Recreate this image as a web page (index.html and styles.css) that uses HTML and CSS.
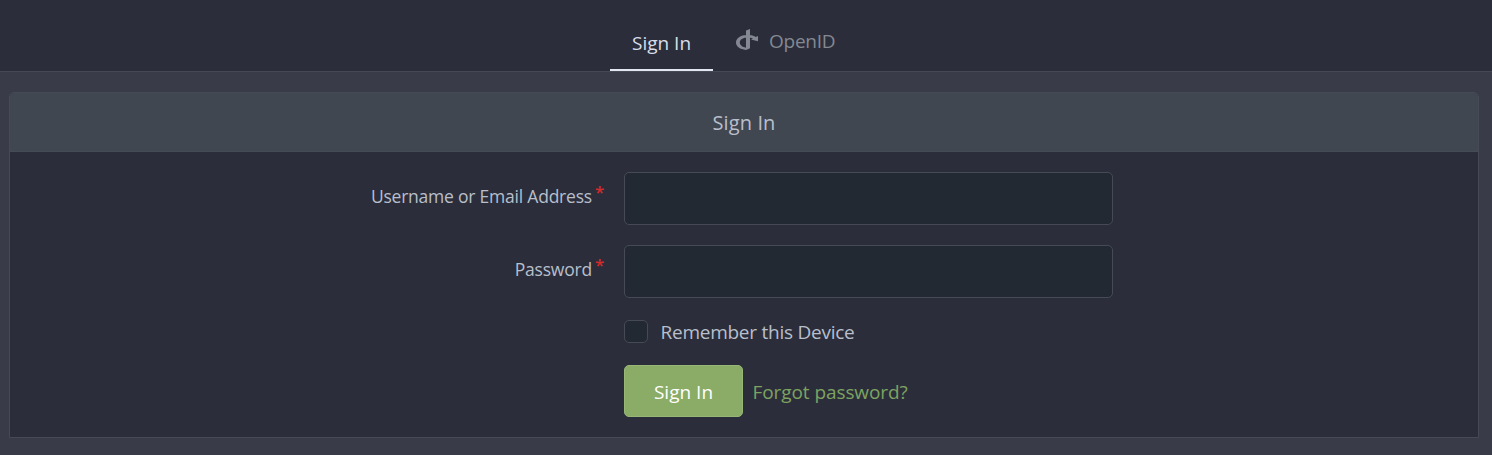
FILE: index.html
```html
<!DOCTYPE html>
<html lang="en">
<head>
<meta charset="utf-8">
<title>Sign In</title>
<link rel="stylesheet" href="styles.css">
</head>
<body>
<nav class="tabs">
  <a class="tab active">Sign In</a>
  <a class="tab openid">
    <svg class="openid-icon" width="23" height="21" viewBox="0 0 23 21"><path d="M10 1.500 14 0v19.200L10 21C4 20.500 0 17.600 0 13.600S4 6.700 10 6.100v2.500c-3.800.6-6.200 2.500-6.200 5s2.500 4.600 6.200 5.100zM14 6.100c2.200.2 4.200.9 5.700 1.800L22 6.900v5.300l-7-1.600 2-1.100c-.9-.4-1.900-.7-3-.9z"/></svg>
    <span>OpenID</span>
  </a>
</nav>
<main class="panel">
  <h1 class="panel-title">Sign In</h1>
  <form class="form">
    <label class="label"><span>Username or Email Address</span><span class="required">*</span></label>
    <div class="input"></div>
    <label class="label"><span>Password</span><span class="required">*</span></label>
    <div class="input"></div>
    <div class="remember"><span class="checkbox"></span><span class="remember-text">Remember this Device</span></div>
    <div class="actions"><button class="button" type="button">Sign In</button><a class="forgot">Forgot password?</a></div>
  </form>
</main>
</body>
</html>
```
FILE: styles.css
```css
* { box-sizing: border-box; }
body {
  margin: 0;
  height: 455px;
  overflow: hidden;
  background: #393b49;
  color: #b8bfcc;
  font: 19px/28px "Open Sans", sans-serif;
  letter-spacing: -0.25px;
  white-space: nowrap;
}
.tabs {
  display: flex;
  height: 72px;
  padding-left: 610px;
  background: #2b2e3a;
  border-bottom: 1px solid #464956;
}
.tab { display: flex; height: 71px; }
.active {
  width: 103px;
  padding: 29px 0 0 22px;
  color: #d8dee9;
  border-bottom: 2px solid #e1e6f0;
  letter-spacing: 0;
}
.openid { padding: 27px 0 0 23px; color: #848892; }
.openid-icon { margin: 2px 10px 0 0; fill: #848892; }
.panel {
  width: 1470px;
  height: 346px;
  margin: 20px 0 0 9px;
  background: #2b2e3a;
  border: 1px solid #464956;
  border-radius: 5px 5px 0 0;
}
.panel-title {
  display: flex;
  justify-content: center;
  height: 59px;
  margin: 0;
  padding-top: 16px;
  background: #414751;
  border-bottom: 1px solid #464b57;
  border-radius: 4px 4px 0 0;
  font-size: 20px;
  font-weight: 400;
  letter-spacing: 0.1px;
}
.form {
  display: grid;
  grid-template-columns: 594px 489px;
  grid-template-rows: 53px 53px 23px 52px;
  column-gap: 20px;
  row-gap: 20px;
  padding-top: 20px;
}
.label {
  display: flex;
  justify-content: flex-end;
  padding-top: 10px;
  font-size: 17.5px;
  letter-spacing: -0.22px;
}
.required { margin: -4px 0 0 3px; color: #d42a2a; font-size: 17px; font-weight: 600; }
.input {
  background: #232932;
  border: 1px solid #464956;
  border-radius: 5px;
}
.remember, .actions { grid-column: 2; display: flex; align-items: center; }
.remember { margin: 2px 0 -2px; }
.actions { margin: 4px 0 -4px; }
.checkbox {
  width: 24px;
  height: 23px;
  margin-right: 12.5px;
  background: #232932;
  border: 1px solid #464956;
  border-radius: 5px;
}
.button {
  width: 119px;
  height: 52px;
  padding: 2px 0 0;
  background: #8aac66;
  border: 1px solid #98b777;
  border-radius: 5px;
  color: #fff;
  font: inherit;
  letter-spacing: 0;
}
.forgot { margin-left: 9.5px; padding-top: 2px; color: #7da361; letter-spacing: -0.08px; }
```
